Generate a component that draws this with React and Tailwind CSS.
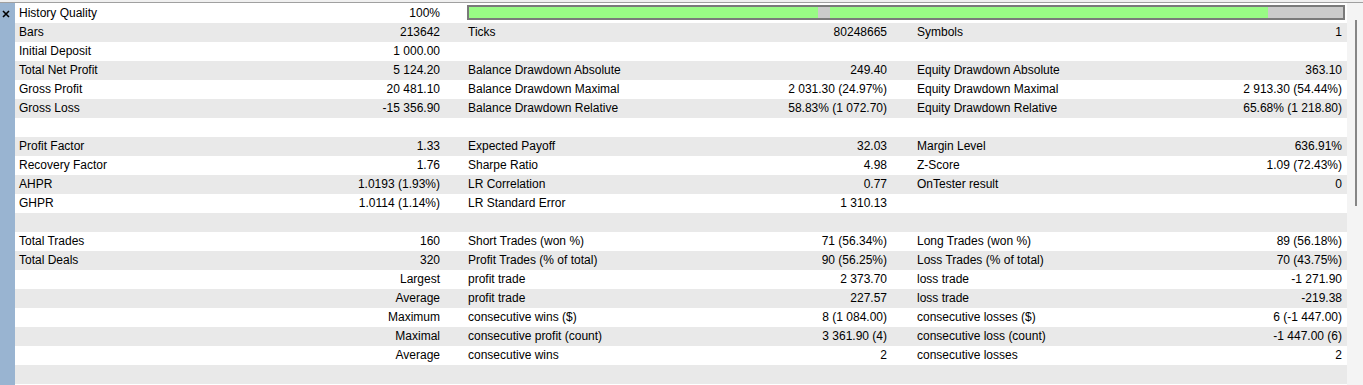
// App.jsx
// Strategy tester report — summary table in the style of MT5

const rows = [
  ["History Quality", "100%", "BAR"],
  ["Bars", "213642", "Ticks", "80248665", "Symbols", "1"],
  ["Initial Deposit", "1 000.00", "", "", "", ""],
  ["Total Net Profit", "5 124.20", "Balance Drawdown Absolute", "249.40", "Equity Drawdown Absolute", "363.10"],
  ["Gross Profit", "20 481.10", "Balance Drawdown Maximal", "2 031.30 (24.97%)", "Equity Drawdown Maximal", "2 913.30 (54.44%)"],
  ["Gross Loss", "-15 356.90", "Balance Drawdown Relative", "58.83% (1 072.70)", "Equity Drawdown Relative", "65.68% (1 218.80)"],
  [],
  ["Profit Factor", "1.33", "Expected Payoff", "32.03", "Margin Level", "636.91%"],
  ["Recovery Factor", "1.76", "Sharpe Ratio", "4.98", "Z-Score", "1.09 (72.43%)"],
  ["AHPR", "1.0193 (1.93%)", "LR Correlation", "0.77", "OnTester result", "0"],
  ["GHPR", "1.0114 (1.14%)", "LR Standard Error", "1 310.13", "", ""],
  [],
  ["Total Trades", "160", "Short Trades (won %)", "71 (56.34%)", "Long Trades (won %)", "89 (56.18%)"],
  ["Total Deals", "320", "Profit Trades (% of total)", "90 (56.25%)", "Loss Trades (% of total)", "70 (43.75%)"],
  ["", "Largest", "profit trade", "2 373.70", "loss trade", "-1 271.90"],
  ["", "Average", "profit trade", "227.57", "loss trade", "-219.38"],
  ["", "Maximum", "consecutive wins ($)", "8 (1 084.00)", "consecutive losses ($)", "6 (-1 447.00)"],
  ["", "Maximal", "consecutive profit (count)", "3 361.90 (4)", "consecutive loss (count)", "-1 447.00 (6)"],
  ["", "Average", "consecutive wins", "2", "consecutive losses", "2"],
  [],
];

function QualityBar() {
  // segmentos: verde / hueco gris / verde / resto gris
  return (
    <div className="ml-[3px] mt-px h-[15px] w-[878px] border-2 border-[#7a7a7a] flex">
      <div className="w-[349px] bg-[#99fb85]" />
      <div className="w-[12px] bg-[#cbcbcb]" />
      <div className="w-[438px] bg-[#99fb85]" />
      <div className="flex-1 bg-[#cbcbcb]" />
    </div>
  );
}

function Row({ cells, index }) {
  const bg = index % 2 === 0 ? "bg-white" : "bg-[#e9e9e9]";
  const [l1, v1, l2, v2, l3, v3] = cells;

  return (
    <div className={`h-[19px] grid grid-cols-[449px_449px_434px] ${bg}`}>
      <div className="flex justify-between items-center pl-1 pr-[24px] leading-[19px]">
        <span>{l1}</span>
        <span>{v1}</span>
      </div>
      {l2 === "BAR" ? (
        <div className="col-span-2">
          <QualityBar />
        </div>
      ) : (
        <>
          <div className="flex justify-between items-center pl-1 pr-[26px] leading-[19px]">
            <span>{l2}</span>
            <span>{v2}</span>
          </div>
          <div className="flex justify-between items-center pl-1 pr-[5px] leading-[19px]">
            <span>{l3}</span>
            <span>{v3}</span>
          </div>
        </>
      )}
    </div>
  );
}

export default function App() {
  return (
    <div className="w-[1363px] h-[385px] bg-white overflow-hidden text-[12px] text-black font-['Liberation_Sans',Arial,sans-serif]">
      <div className="h-[2px] bg-[#f0f0f0]" />
      <div className="h-px bg-[#a0a0a0]" />

      <div className="flex h-[382px]">
        {/* franja lateral con el botón de cerrar */}
        <div className="w-[15px] bg-[#99b4d1] shrink-0">
          <svg width="8" height="8" viewBox="0 0 8 8" className="ml-[2px] mt-[7px]">
            <path d="M1 1 L7 7 M7 1 L1 7" stroke="#000" strokeWidth="1.6" />
          </svg>
        </div>

        <div className="w-[1332px] shrink-0 pt-px">
          {rows.map((cells, i) => (
            <Row key={i} cells={cells} index={i} />
          ))}
        </div>

        {/* barra de desplazamiento */}
        <div className="flex-1 bg-[#f4f4f4] pt-[17px] pl-[8px]">
          <div className="w-[2px] h-[186px] bg-[#868686]" />
        </div>
      </div>
    </div>
  );
}
